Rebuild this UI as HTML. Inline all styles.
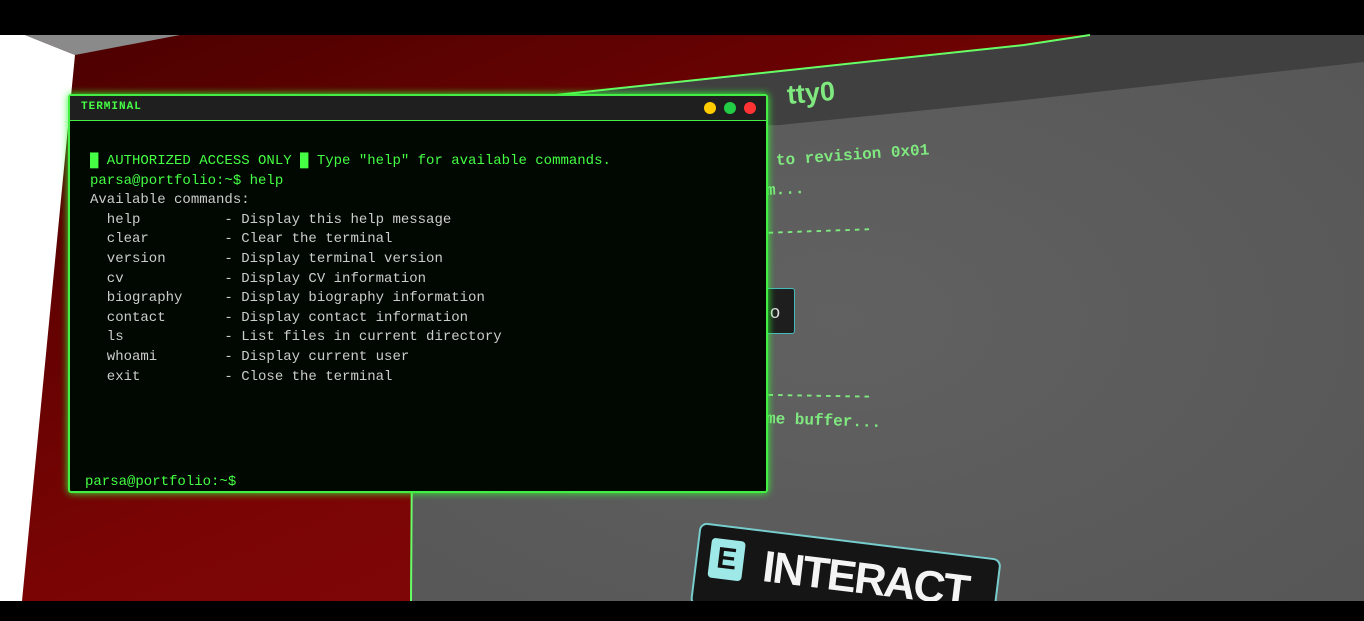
<!DOCTYPE html>
<html style="overflow:hidden;height:621px"><head><style>
html,body{margin:0;width:1364px;height:621px;overflow:hidden}
body{background:#000;position:relative;font-family:"Liberation Mono",monospace}
.abs{position:absolute}
#term{left:68px;top:94px;width:696px;height:395px;border:2px solid #44ee44;border-radius:3px;background:#010801;box-shadow:0 0 8px #3f3;}
#tb{height:24px;background:#1f1f1f;border-bottom:1px solid #44ee44;position:relative}
#tb span{position:absolute;left:11px;top:5px;font-size:11px;font-weight:bold;color:#44ff44;letter-spacing:1px}
.dot{position:absolute;top:6px;width:12px;height:12px;border-radius:50%}
pre{position:absolute;left:20px;top:56px;margin:0;font-family:"Liberation Mono",monospace;font-size:14px;line-height:19.6px;color:#ccc}
.g{color:#44ff44}
.st{position:absolute;color:#7fe87f;font-family:"Liberation Mono",monospace;font-size:16px;font-weight:bold;white-space:pre;transform-origin:left center}
#clip{position:absolute;left:0;top:0;width:1364px;height:601px;overflow:hidden}
</style></head><body>
<div id="clip">
<svg class="abs" style="left:0;top:0" width="1364" height="621">
<defs>
<linearGradient id="r" x1="0" y1="0" x2="1" y2="1"><stop offset="0" stop-color="#4a0000"/><stop offset=".5" stop-color="#7a0404"/><stop offset="1" stop-color="#8a0a0a"/></linearGradient>
<radialGradient id="s" cx=".45" cy=".5" r=".7"><stop offset="0" stop-color="#616161"/><stop offset="1" stop-color="#575757"/></radialGradient>
</defs>
<rect x="0" y="35" width="1364" height="566" fill="url(#r)"/>
<polygon points="0,35 25,35 75,55 22,601 0,601" fill="#fff"/>
<polygon points="25,35 180,35 75,55" fill="#8a8a8a"/>
<polygon points="415,110 1024,45 1090,35 1364,35 1364,601 410,601" fill="url(#s)"/>
<polygon points="415,110 1024,45 1090,35 1364,35 1364,62 1024,100 780,125 415,135" fill="#404040"/>
<polyline points="415,110 1024,45 1090,35" stroke="#66ff66" stroke-width="2" fill="none"/>
<line x1="414" y1="130" x2="411" y2="601" stroke="#66ff66" stroke-width="2"/>
</svg>
<div class="abs" style="left:787px;top:78px;font-family:'Liberation Sans',sans-serif;font-size:27px;font-weight:bold;color:#7fe87f;transform:rotate(-5deg)">tty0</div>
<div class="st" style="left:776px;top:152px;transform:rotate(-4deg)">to revision 0x01</div>
<div class="st" style="left:766px;top:182px;transform:rotate(-3deg)">m...</div>
<div class="st" style="left:766px;top:224px;transform:rotate(-2deg)">-----------</div>
<div class="abs" style="left:740px;top:288px;width:55px;height:46px;background:#1e1e1e;border:1px solid #4bb;border-radius:3px;color:#ddd;font-family:'Liberation Sans';font-size:18px;line-height:46px;text-align:right;padding-right:14px;box-sizing:border-box">o</div>
<div class="st" style="left:766px;top:386px;transform:rotate(1deg)">-----------</div>
<div class="st" style="left:766px;top:410px;transform:rotate(2deg)">me buffer...</div>
<div class="abs" style="left:700px;top:522px;width:300px;height:80px;background:#151515;border:2px solid #7cc;border-radius:8px;transform:rotate(7deg);transform-origin:left top">
<div class="abs" style="left:12px;top:12px;width:34px;height:40px;background:#9ee8e8;border-radius:4px;color:#111;font:bold 30px 'Liberation Sans';text-align:center;line-height:40px">E</div>
<div class="abs" style="left:66px;top:10px;color:#f4f4f4;font:bold 44px 'Liberation Sans';letter-spacing:-2px">INTERACT</div>
</div>
<div id="term" class="abs">
<div id="tb"><span>TERMINAL</span>
<div class="dot" style="left:634px;background:#fc0"></div>
<div class="dot" style="left:654px;background:#2c4"></div>
<div class="dot" style="left:674px;background:#f33"></div></div>
<pre><span class="g">█ AUTHORIZED ACCESS ONLY █ Type "help" for available commands.
parsa@portfolio:~$ help</span>
Available commands:
  help          - Display this help message
  clear         - Clear the terminal
  version       - Display terminal version
  cv            - Display CV information
  biography     - Display biography information
  contact       - Display contact information
  ls            - List files in current directory
  whoami        - Display current user
  exit          - Close the terminal</pre>
<div class="abs g" style="left:15px;top:378px;font-size:14px">parsa@portfolio:~$</div>
</div>
</div>
</body></html>
